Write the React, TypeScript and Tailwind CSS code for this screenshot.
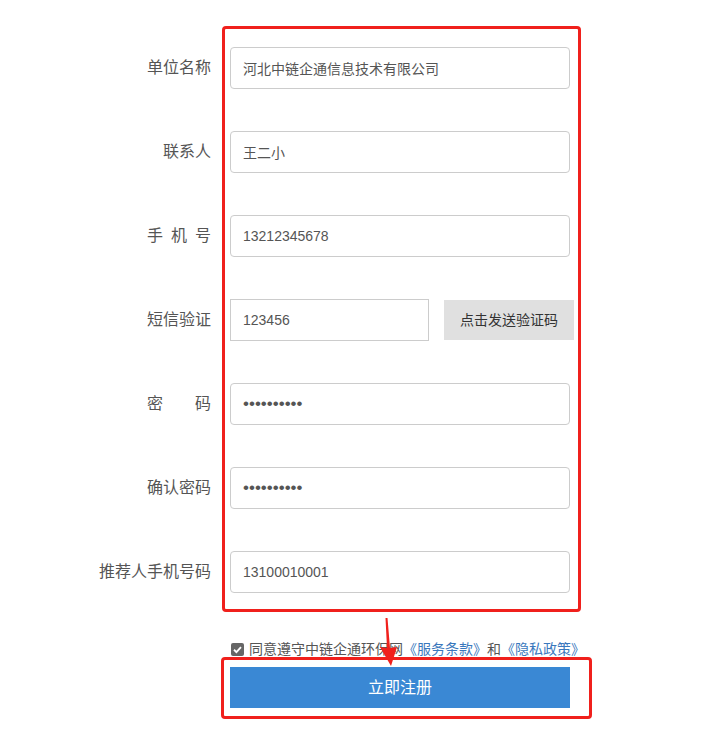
const font = { fontFamily: '"Liberation Sans", "Noto Sans CJK SC", sans-serif' };

type Row = { label: React.ReactNode; value: string };

const rows: Row[] = [
  { label: '单位名称', value: '河北中链企通信息技术有限公司' },
  { label: '联系人', value: '王二小' },
  { label: '手\u2002机\u2002号', value: '13212345678' },
];

const rows2: Row[] = [
  { label: '密\u3000\u3000码', value: '••••••••••' },
  { label: '确认密码', value: '••••••••••' },
  { label: '推荐人手机号码', value: '13100010001' },
];

const Label = ({ children }: { children: React.ReactNode }) => (
  <div className="w-[211px] shrink-0 whitespace-pre text-right text-[16px] text-[#555]">{children}</div>
);

const Field = ({ value, dots }: { value: string; dots?: boolean }) => (
  <input
    readOnly
    value={value}
    className={
      'h-[42px] w-[340px] rounded-[4px] border border-[#ccc] bg-white px-[12px] text-[#555] outline-none ' +
      (dots ? 'text-[17px] tracking-[0px]' : 'text-[14px]')
    }
    style={font}
  />
);

const FormRow = ({ row }: { row: Row }) => (
  <div className="flex h-[42px] items-center gap-[19px]">
    <Label>{row.label}</Label>
    <Field value={row.value} dots={row.value.startsWith('•')} />
  </div>
);

export default function App() {
  return (
    <div className="relative h-[741px] w-[702px] overflow-hidden bg-white" style={font}>
      <div className="flex flex-col gap-[42px] pt-[47px]">
        {rows.map((r) => (
          <FormRow key={r.value} row={r} />
        ))}
        <div className="flex h-[42px] items-center gap-[19px]">
          <Label>短信验证</Label>
          <input
            readOnly
            value="123456"
            className="h-[42px] w-[199px] border border-[#ccc] bg-white px-[12px] text-[14px] text-[#555] outline-none"
            style={font}
          />
          <button className="ml-[-4px] h-[40px] w-[130px] bg-[#e0e0e0] text-[14px] text-[#333]">点击发送验证码</button>
        </div>
        {rows2.map((r) => (
          <FormRow key={r.label as string} row={r} />
        ))}
      </div>

      <div className="ml-[231px] mt-[49px] flex items-center gap-[5px] text-[14px] leading-[14px] text-[#555]">
        <span className="flex h-[13px] w-[13px] items-center justify-center rounded-[2px] bg-[#666]">
          <svg width="11" height="11" viewBox="0 0 12 12">
            <path d="M2.2 6.3 L4.8 8.8 L9.8 3.3" fill="none" stroke="#fff" strokeWidth="2" />
          </svg>
        </span>
        <span>
          同意遵守中链企通环保网<span className="text-[#3a78bd]">《服务条款》</span>和
          <span className="text-[#3a78bd]">《隐私政策》</span>
        </span>
      </div>

      <button className="ml-[230px] mt-[11px] block h-[41px] w-[340px] bg-[#3a88d4] text-[16px] text-white">立即注册</button>

      {/* annotation overlays */}
      <div className="pointer-events-none absolute left-[222px] top-[26px] h-[586px] w-[359px] rounded-[4px] border-[3px] border-[#f0201c]" />
      <div className="pointer-events-none absolute left-[221px] top-[657px] h-[62px] w-[371px] rounded-[4px] border-[3px] border-[#f0201c]" />
      <svg className="pointer-events-none absolute left-0 top-0" width="702" height="741">
        <polygon points="385.5,618 387.5,618 390,648 397,647 391,666 380,647 387,648" fill="#f0201c" />
      </svg>
    </div>
  );
}
